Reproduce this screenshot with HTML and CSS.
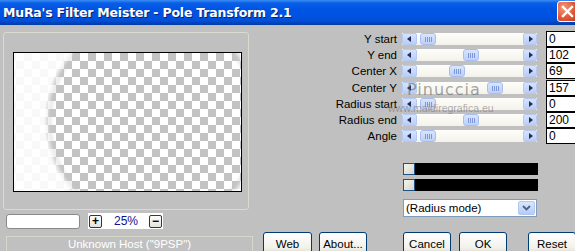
FILE: index.html
```html
<!DOCTYPE html>
<html>
<head>
<meta charset="utf-8">
<link rel="stylesheet" href="styles.css">
</head>
<body>
<div class="window">
  <div class="titlebar">
    <span class="title">MuRa's Filter Meister - Pole Transform 2.1</span>
    <span class="close"><svg width="13" height="13" viewBox="0 0 13 13"><path d="M2 2 L11 11 M11 2 L2 11" stroke="#fff" stroke-width="2.4" stroke-linecap="square"/></svg></span>
  </div>
  <div class="client">
    <div class="left">
      <div class="group">
        <div class="preview"><div class="fade"></div></div>
      </div>
      <div class="zoomrow">
        <div class="zoominput"></div>
        <div class="zoomctl">
          <span class="zbtn">+</span>
          <span class="zval">25%</span>
          <span class="zbtn">&minus;</span>
        </div>
      </div>
    </div>
    <div class="right">
      <div class="sliders">
        <div class="row"><span class="lbl">Y start</span><div class="track"><span class="arr l"></span><span class="thumb" style="left:18px"></span><span class="arr r"></span></div><span class="val">0</span></div>
        <div class="row"><span class="lbl">Y end</span><div class="track"><span class="arr l"></span><span class="thumb" style="left:61px"></span><span class="arr r"></span></div><span class="val">102</span></div>
        <div class="row"><span class="lbl">Center X</span><div class="track"><span class="arr l"></span><span class="thumb" style="left:47px"></span><span class="arr r"></span></div><span class="val">69</span></div>
        <div class="row"><span class="lbl">Center Y</span><div class="track"><span class="arr l"></span><span class="thumb" style="left:85px"></span><span class="arr r"></span></div><span class="val">157</span></div>
        <div class="row"><span class="lbl">Radius start</span><div class="track"><span class="arr l"></span><span class="thumb" style="left:18px"></span><span class="arr r"></span></div><span class="val">0</span></div>
        <div class="row"><span class="lbl">Radius end</span><div class="track"><span class="arr l"></span><span class="thumb" style="left:61px"></span><span class="arr r"></span></div><span class="val">200</span></div>
        <div class="row"><span class="lbl">Angle</span><div class="track"><span class="arr l"></span><span class="thumb" style="left:18px"></span><span class="arr r"></span></div><span class="val">0</span></div>
      </div>
      <div class="colors">
        <div class="crow"><span class="chk"></span><span class="swatch"></span></div>
        <div class="crow"><span class="chk"></span><span class="swatch"></span></div>
      </div>
      <div class="select">
        <span class="seltext">(Radius mode)</span>
        <span class="selbtn"><svg width="9" height="6" viewBox="0 0 9 6"><path d="M1 1 L4.5 4.5 L8 1" fill="none" stroke="#4d6185" stroke-width="1.8"/></svg></span>
      </div>
    </div>
  </div>
  <div class="bottom">
    <div class="status">Unknown Host ("9PSP")</div>
    <span class="btn b-web">Web</span>
    <span class="btn b-about">About...</span>
    <span class="btn b-cancel">Cancel</span>
    <span class="btn b-ok">OK</span>
    <span class="btn b-reset">Reset</span>
  </div>
  <div class="watermark">
    <span class="wm1">Pinuccia</span>
    <span class="wm2">www.maidiregrafica.eu</span>
  </div>
</div>
</body>
</html>
```

FILE: styles.css
```css
* { box-sizing: border-box; }
html, body { margin: 0; padding: 0; }
body {
  width: 575px;
  height: 251px;
  overflow: hidden;
  background: #c0c0c0;
  font-family: "Liberation Sans", Arial, sans-serif;
  font-size: 11.5px;
  color: #000;
}
.window {
  position: relative;
  width: 575px;
  height: 251px;
  overflow: hidden;
  background: #c0c0c0;
}
.titlebar {
  height: 25px;
  display: flex;
  align-items: center;
  background: linear-gradient(to bottom, #3a8cf6 0px, #0a5fe6 3px, #0055e5 8px, #0052e0 16px, #004ed8 21px, #0043b8 23px, #003ba8 25px);
  padding-left: 3px;
  position: relative;
}
.title {
  color: #fff;
  font-family: "DejaVu Sans", sans-serif;
  font-weight: bold;
  font-size: 12.5px;
  letter-spacing: -0.2px;
  text-shadow: 1px 1px 0 #0a1f7a;
  flex: 1;
}
.close {
  position: absolute;
  left: 557px;
  top: 1px;
  width: 21px;
  height: 21px;
  border: 1px solid #fff;
  border-radius: 3px;
  background: radial-gradient(circle at 30% 30%, #f09a7c 0, #e0583a 55%, #c13a1e 100%);
  display: flex;
  align-items: center;
  justify-content: center;
}
.client {
  display: flex;
  height: 207px;
}
.left {
  flex: 0 0 255px;
  width: 255px;
  padding-left: 3px;
  padding-top: 7px;
}
.group {
  width: 246px;
  height: 178px;
  border: 1px solid #dadace;
  border-radius: 3px;
  padding: 19px 0 0 9px;
}
.preview {
  position: relative;
  width: 229px;
  height: 140px;
  border: 1px solid #000;
  background: conic-gradient(#c3c3c3 25%, #fff 0 50%, #c3c3c3 0 75%, #fff 0) 2px 0 / 16px 16px;
  overflow: hidden;
}
.fade {
  position: absolute;
  inset: 0;
  background: radial-gradient(circle at 140px 68px, rgba(255,255,255,0) 100px, rgba(200,200,200,0.35) 104px, rgba(255,255,255,0.9) 110px);
}
.zoomrow {
  display: flex;
  align-items: center;
  margin-top: 3px;
  padding-left: 3px;
}
.zoominput {
  width: 74px;
  height: 15px;
  background: #fff;
  border: 1px solid #8a8a8a;
  border-radius: 3px;
}
.zoomctl {
  margin-left: 8px;
  width: 75px;
  height: 16px;
  background: #fff;
  display: flex;
  align-items: center;
  padding-left: 1px;
}
.zbtn {
  width: 13px;
  height: 13px;
  border: 1px solid #1c3a66;
  border-radius: 2px;
  background: linear-gradient(#fdfdfb, #e4e2da);
  display: flex;
  align-items: center;
  justify-content: center;
  font-weight: bold;
  font-size: 12px;
  line-height: 1;
}
.zval {
  width: 47px;
  text-align: center;
  color: #101090;
  font-size: 12px;
  padding-left: 1px;
}
.right {
  flex: 1;
  min-width: 0;
  padding-top: 6px;
}
.row {
  display: flex;
  height: 16.2px;
}
.lbl {
  flex: 0 0 142px;
  text-align: right;
  padding-top: 1px;
  line-height: 14px;
}
.track {
  flex: 0 0 135px;
  position: relative;
  margin-left: 5px;
  margin-top: 2px;
  height: 12px;
  background: linear-gradient(#fefefa, #f3f2ea);
  display: flex;
  justify-content: space-between;
}
.arr {
  width: 15px;
  height: 12px;
  border: 1px solid #b4c8f4;
  border-radius: 2px;
  background: linear-gradient(#d6e3fd, #b9cdf7);
  position: relative;
}
.arr.r { width: 14px; }
.arr::after {
  content: "";
  position: absolute;
  top: 2px;
  border-top: 3.5px solid transparent;
  border-bottom: 3.5px solid transparent;
}
.arr.l::after { left: 4px; border-right: 4px solid #1f2f58; }
.arr.r::after { left: 5px; border-left: 4px solid #1f2f58; }
.thumb {
  position: absolute;
  top: 0;
  width: 16px;
  height: 12px;
  border: 1px solid #a9bdf0;
  border-radius: 3px;
  background:
    linear-gradient(90deg, transparent 4px, #7e97d8 4px 5px, transparent 5px 6px, #7e97d8 6px 7px, transparent 7px 8px, #7e97d8 8px 9px, transparent 9px 10px, #7e97d8 10px 11px, transparent 11px) 0 3px / 100% 5px no-repeat,
    linear-gradient(#d9e5fd, #bcd0f8);
}
.val {
  flex: 0 0 40px;
  margin-left: 9px;
  height: 16px;
  background: #fff;
  border-left: 1px solid #000;
  border-top: 1px solid #000;
  border-bottom: 1px solid #000;
  padding-left: 2px;
  line-height: 14px;
  font-size: 12px;
}
.colors {
  margin-top: 19px;
  margin-left: 148px;
  display: flex;
  flex-direction: column;
  gap: 4px;
}
.crow {
  display: flex;
  width: 135px;
  height: 12px;
  background: #000;
}
.chk {
  width: 12px;
  height: 12px;
  border: 1px solid #1d5282;
  background: linear-gradient(135deg, #f4f4ee, #d7d6cc);
}
.select {
  margin-top: 8px;
  margin-left: 148px;
  width: 134px;
  height: 18px;
  background: #fff;
  border: 1px solid #7f9db9;
  display: flex;
  align-items: center;
  justify-content: space-between;
  padding-left: 2px;
  padding-right: 1px;
}
.selbtn {
  width: 17px;
  height: 14px;
  border: 1px solid #b2c6f2;
  border-radius: 2px;
  background: linear-gradient(#dbe6fd, #b6cbf7);
  display: flex;
  align-items: center;
  justify-content: center;
}
.bottom {
  display: flex;
  align-items: flex-start;
  padding-left: 6px;
}
.status {
  flex: 0 0 247px;
  margin-top: 4px;
  height: 20px;
  border: 1px solid #d6d6ca;
  color: #fff;
  text-align: center;
  line-height: 14px;
}
.btn {
  flex: 0 0 auto;
  height: 23px;
  border: 1px solid #003c74;
  border-radius: 3px;
  background: linear-gradient(#ffffff, #f2f1ea 70%, #dedbd0);
  display: flex;
  justify-content: center;
  padding-top: 4px;
  line-height: 14px;
}
.b-web { margin-left: 10px; width: 49px; }
.b-about { margin-left: 7px; width: 48px; }
.b-cancel { margin-left: 36px; width: 48px; }
.b-ok { margin-left: 8px; width: 48px; }
.b-reset { margin-left: 21px; width: 48px; }
.watermark {
  position: absolute;
  left: 388px;
  top: 80px;
  display: flex;
  flex-direction: column;
  pointer-events: none;
}
.wm1 {
  margin-left: 19px;
  font-family: "DejaVu Sans", sans-serif;
  font-size: 16px;
  letter-spacing: 1px;
  color: rgba(90,90,90,0.55);
  line-height: 19px;
}
.wm2 {
  margin-top: 3px;
  font-size: 10.5px;
  color: rgba(110,110,110,0.55);
  line-height: 12px;
}
```
